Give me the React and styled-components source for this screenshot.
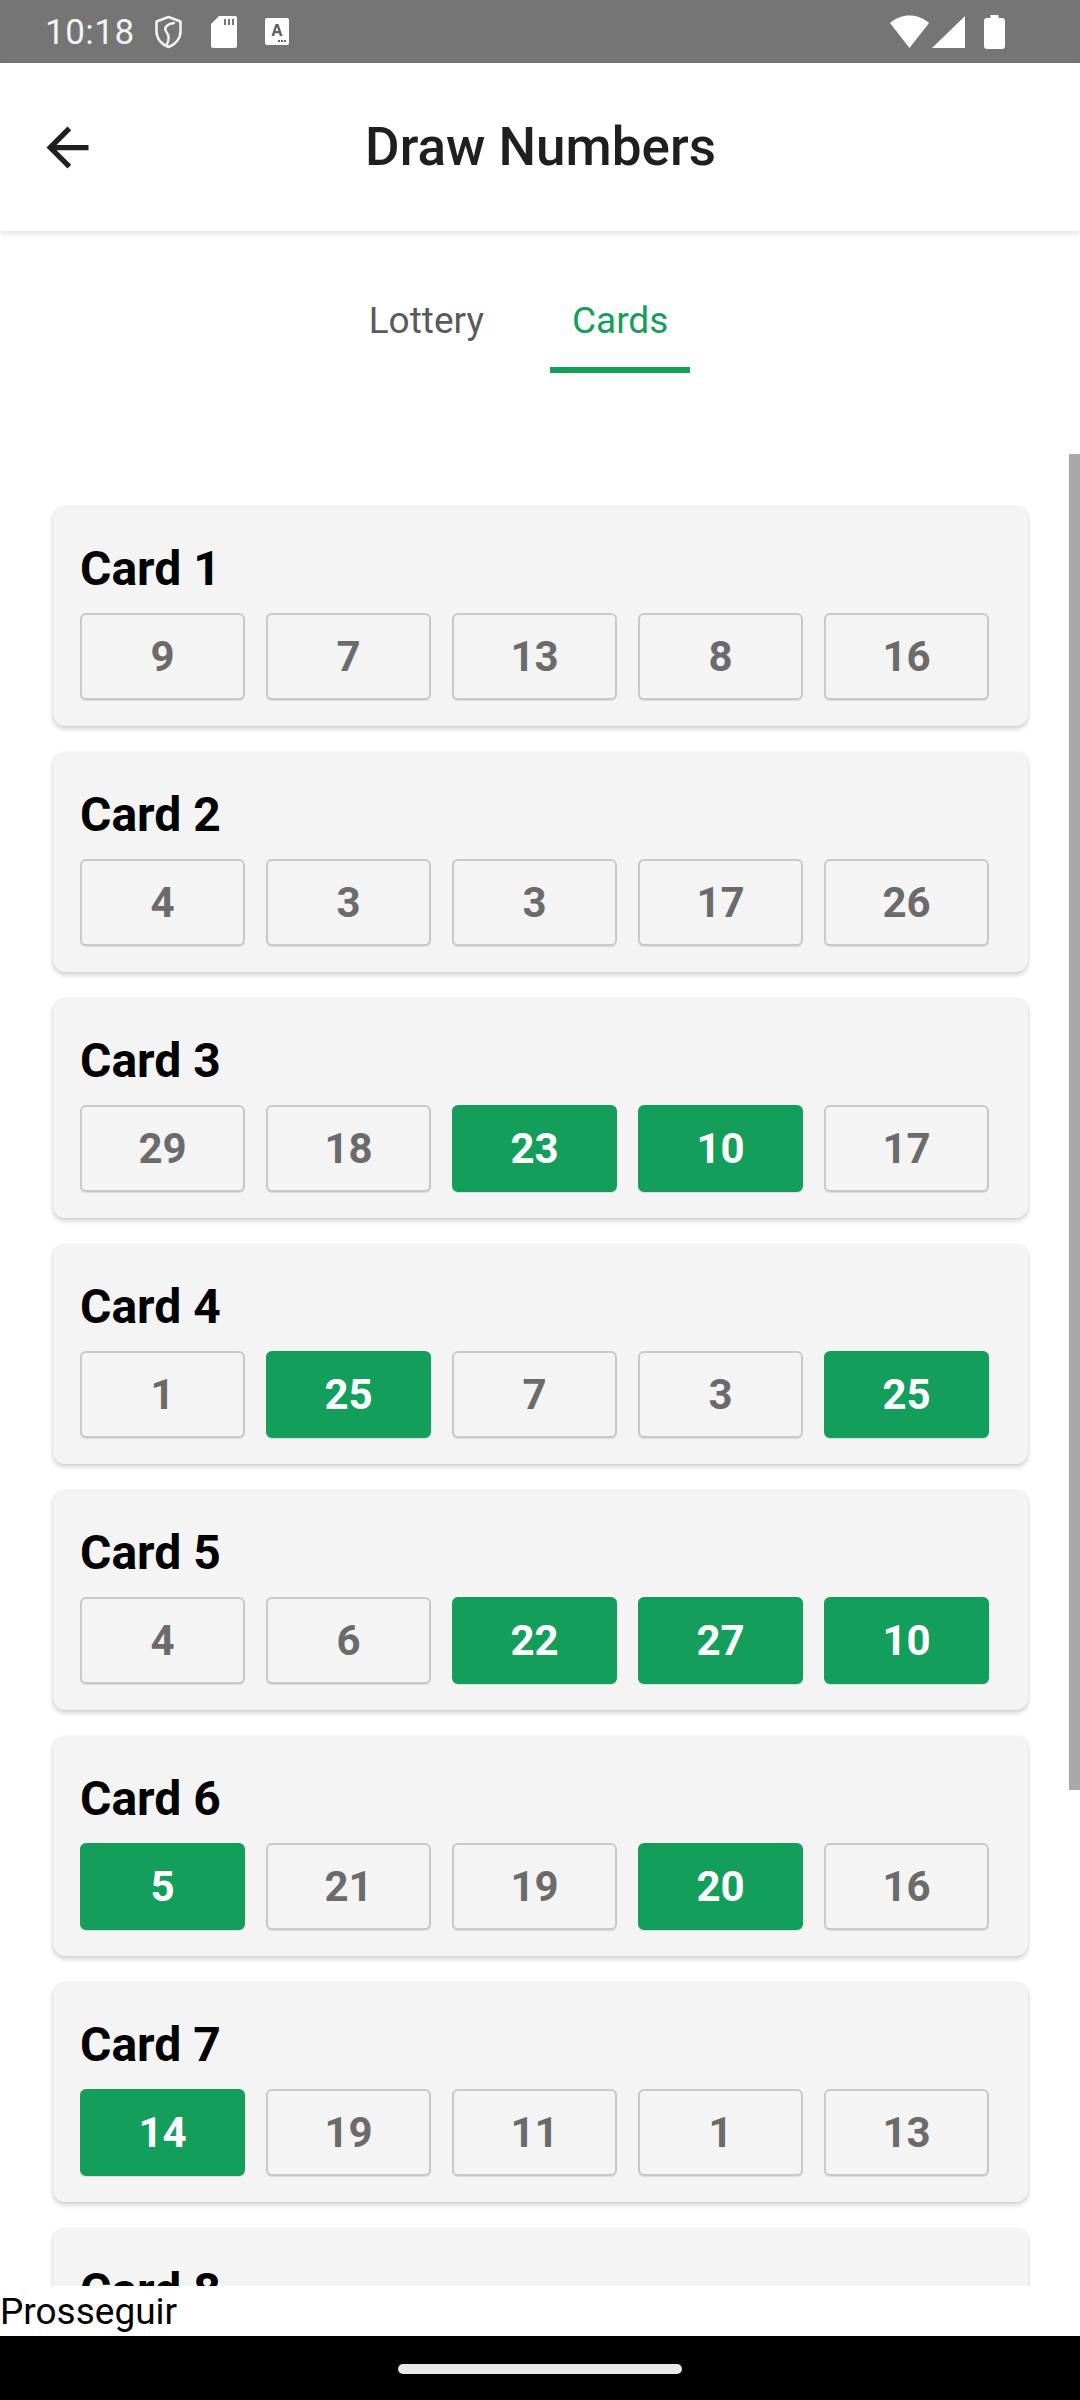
import styled, { createGlobalStyle } from "styled-components";

const GlobalStyle = createGlobalStyle`
  html, body {
    margin: 0;
    padding: 0;
    background: #ffffff;
  }
  body {
    font-family: Roboto, "Noto Sans", "Liberation Sans", sans-serif;
  }
  * {
    box-sizing: border-box;
  }
`;

const GREEN = "#139e5b";

const cards = [
  { id: 1, numbers: [9, 7, 13, 8, 16], hits: [] },
  { id: 2, numbers: [4, 3, 3, 17, 26], hits: [] },
  { id: 3, numbers: [29, 18, 23, 10, 17], hits: [2, 3] },
  { id: 4, numbers: [1, 25, 7, 3, 25], hits: [1, 4] },
  { id: 5, numbers: [4, 6, 22, 27, 10], hits: [2, 3, 4] },
  { id: 6, numbers: [5, 21, 19, 20, 16], hits: [0, 3] },
  { id: 7, numbers: [14, 19, 11, 1, 13], hits: [0] },
  { id: 8, numbers: [2, 12, 24, 8, 30], hits: [] },
];

const Screen = styled.div`
  width: 1080px;
  height: 2400px;
  display: flex;
  flex-direction: column;
  overflow: hidden;
  background: #ffffff;
`;

const StatusBar = styled.div`
  height: 63px;
  flex-shrink: 0;
  background: #757575;
  display: flex;
  align-items: center;
  padding: 0 0 0 45px;
  color: #f2f2f2;
`;

const Time = styled.span`
  font-size: 35px;
  line-height: 1;
  letter-spacing: 0.5px;
  margin-right: 19px;
  margin-top: 2px;
`;

const StatusIcons = styled.div`
  display: flex;
  align-items: center;
  gap: ${(p) => p.$gap || 0}px;
  margin-left: ${(p) => (p.$push ? "auto" : "0")};
  margin-right: ${(p) => (p.$push ? "75px" : "0")};
`;

const BatterySlot = styled.span`
  display: flex;
  margin-left: 16px;
`;

const Header = styled.header`
  height: 168px;
  flex-shrink: 0;
  display: flex;
  align-items: center;
  background: #ffffff;
  position: relative;
  z-index: 2;
  box-shadow: 0 2px 6px rgba(0, 0, 0, 0.14);
`;

const BackButton = styled.button`
  width: 63px;
  height: 63px;
  margin-left: 36px;
  padding: 0;
  border: none;
  background: none;
  display: flex;
  align-items: center;
  justify-content: center;
`;

const Title = styled.h1`
  flex: 1;
  margin: 0 99px 0 0;
  text-align: center;
  font-size: 53px;
  font-weight: 500;
  color: #1f1f1f;
  padding-left: 1px;
`;

const TabSection = styled.div`
  height: 223px;
  flex-shrink: 0;
  padding-top: 44px;
`;

const TabBar = styled.nav`
  display: flex;
  justify-content: center;
  gap: 44px;
  padding-right: 43px;
`;

const Tab = styled.div`
  height: 98px;
  padding: 0 22px 2px;
  display: flex;
  align-items: center;
  justify-content: center;
  font-size: 37px;
  color: ${(p) => (p.$active ? GREEN : "#5a5a5a")};
  border-bottom: 6px solid ${(p) => (p.$active ? GREEN : "transparent")};
`;

const ListArea = styled.div`
  flex: 1;
  min-height: 0;
  position: relative;
  overflow: hidden;
`;

const CardList = styled.div`
  display: flex;
  flex-direction: column;
  gap: 26px;
  padding: 52px 52px 0 53px;
`;

const ScrollThumb = styled.div`
  position: absolute;
  top: 0;
  right: 0;
  width: 11px;
  height: 1336px;
  background: #a9a9a9;
`;

const Card = styled.section`
  height: 220px;
  flex-shrink: 0;
  background: #f4f4f4;
  border-radius: 12px;
  padding: 35px 0 0 27px;
  box-shadow: 0 3px 5px rgba(0, 0, 0, 0.18), 0 0 2px rgba(0, 0, 0, 0.08);
`;

const CardTitle = styled.h2`
  margin: 0 0 16px;
  font-size: 48px;
  line-height: 56px;
  font-weight: 700;
  color: #000000;
`;

const NumberRow = styled.div`
  display: grid;
  grid-template-columns: repeat(5, 165px);
  gap: 21px;
`;

const NumberBox = styled.div`
  height: 87px;
  display: flex;
  align-items: center;
  justify-content: center;
  border-radius: 6px;
  border: 2px solid ${(p) => (p.$hit ? GREEN : "#c9c9c9")};
  background: ${(p) => (p.$hit ? GREEN : "#f4f4f4")};
  color: ${(p) => (p.$hit ? "#ffffff" : "#6b6b6b")};
  font-size: 42px;
  font-weight: 700;
  box-shadow: 0 1px 1px rgba(0, 0, 0, 0.1);
`;

const Footer = styled.div`
  height: 50px;
  flex-shrink: 0;
  background: #ffffff;
  padding-top: 6px;
  font-size: 37px;
  line-height: 40px;
  color: #000000;
`;

const NavBar = styled.div`
  height: 64px;
  flex-shrink: 0;
  background: #000000;
  display: flex;
  justify-content: center;
  padding-top: 28px;
`;

const HomePill = styled.div`
  width: 284px;
  height: 10px;
  border-radius: 5px;
  background: #e8e8e8;
`;

function ShieldIcon() {
  return (
    <svg width="29" height="34" viewBox="0 0 29 34">
      <path
        d="M14.5 2 L26.5 6.5 V16 C26.5 24 21 29.5 14.5 32 C8 29.5 2.5 24 2.5 16 V6.5 Z"
        fill="none"
        stroke="#f2f2f2"
        strokeWidth="2.6"
        strokeLinejoin="round"
      />
      <path
        d="M20 8 C13 9 9 13 12.5 17 C15.5 21 15.5 25 12.5 30"
        fill="none"
        stroke="#f2f2f2"
        strokeWidth="2.4"
        strokeLinecap="round"
      />
    </svg>
  );
}

function SdCardIcon() {
  return (
    <svg width="26" height="32" viewBox="0 0 26 32">
      <path
        d="M8 0 H24 A2 2 0 0 1 26 2 V30 A2 2 0 0 1 24 32 H2 A2 2 0 0 1 0 30 V8 Z"
        fill="#ffffff"
      />
      <rect x="13" y="3" width="2" height="6" fill="#757575" />
      <rect x="17" y="3" width="2" height="6" fill="#757575" />
      <rect x="21" y="3" width="2" height="6" fill="#757575" />
    </svg>
  );
}

function AccessIcon() {
  return (
    <svg width="24" height="27" viewBox="0 0 24 27">
      <rect x="0" y="0" width="24" height="27" rx="2" fill="#ffffff" />
      <path
        d="M6.5 18 L10.5 6 H13.5 L17.5 18 H14.8 L14 15.3 H10 L9.2 18 Z M10.7 13 H13.3 L12 8.8 Z"
        fill="#616161"
      />
      <rect x="13" y="22" width="2" height="2" fill="#616161" />
      <rect x="16" y="22" width="2" height="2" fill="#616161" />
      <rect x="19" y="22" width="2" height="2" fill="#616161" />
    </svg>
  );
}

function WifiIcon() {
  return (
    <svg width="39" height="33" viewBox="0 0 39 33">
      <path d="M19.5 33 L0 8 C11 -2 28 -2 39 8 Z" fill="#ffffff" />
    </svg>
  );
}

function SignalIcon() {
  return (
    <svg width="33" height="32" viewBox="0 0 33 32">
      <path d="M33 0 V32 H0 Z" fill="#ffffff" />
    </svg>
  );
}

function BatteryIcon() {
  return (
    <svg width="21" height="34" viewBox="0 0 21 34">
      <path
        d="M6.5 0 H14.5 V3 H18 A3 3 0 0 1 21 6 V31 A3 3 0 0 1 18 34 H3 A3 3 0 0 1 0 31 V6 A3 3 0 0 1 3 3 H6.5 Z"
        fill="#ffffff"
      />
    </svg>
  );
}

function ArrowBack() {
  return (
    <svg width="63" height="63" viewBox="0 0 24 24">
      <path
        d="M20 11H7.83l5.59-5.59L12 4l-8 8 8 8 1.41-1.41L7.83 13H20v-2z"
        fill="#1f1f1f"
      />
    </svg>
  );
}

function LotteryCard({ card }) {
  return (
    <Card>
      <CardTitle>Card {card.id}</CardTitle>
      <NumberRow>
        {card.numbers.map((n, i) => (
          <NumberBox key={i} $hit={card.hits.includes(i)}>
            {n}
          </NumberBox>
        ))}
      </NumberRow>
    </Card>
  );
}

export default function App() {
  return (
    <Screen>
      <GlobalStyle />
      <StatusBar>
        <Time>10:18</Time>
        <StatusIcons $gap={28}>
          <ShieldIcon />
          <SdCardIcon />
          <AccessIcon />
        </StatusIcons>
        <StatusIcons $push $gap={3}>
          <WifiIcon />
          <SignalIcon />
          <BatterySlot>
            <BatteryIcon />
          </BatterySlot>
        </StatusIcons>
      </StatusBar>

      <Header>
        <BackButton aria-label="Back">
          <ArrowBack />
        </BackButton>
        <Title>Draw Numbers</Title>
      </Header>

      <TabSection>
        <TabBar>
          <Tab>Lottery</Tab>
          <Tab $active>Cards</Tab>
        </TabBar>
      </TabSection>

      <ListArea>
        <CardList>
          {cards.map((card) => (
            <LotteryCard key={card.id} card={card} />
          ))}
        </CardList>
        <ScrollThumb />
      </ListArea>

      <Footer>Prosseguir</Footer>
      <NavBar>
        <HomePill />
      </NavBar>
    </Screen>
  );
}
